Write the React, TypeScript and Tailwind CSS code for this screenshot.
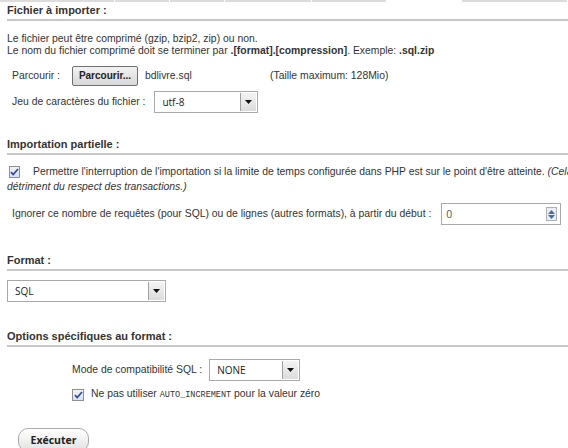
import React from "react";

const font = "font-['Liberation_Sans',Arial,sans-serif]";

function Tabs() {
  const tabs = [115, 55, 55, 87, 75, 75, 106];
  return (
    <div className="flex h-[2px] w-full">
      {tabs.map((w, i) => (
        <div
          key={i}
          style={{ width: w }}
          className={`h-full border-r border-white ${i === 5 ? "bg-white" : "bg-[#dcdcdc]"}`}
        />
      ))}
      <div className="h-full flex-1 bg-[#dcdcdc]" />
    </div>
  );
}

function Heading({ children }: { children: React.ReactNode }) {
  return (
    <div className="ml-[7px] border-b-2 border-[#c8c8c8] pb-[2px] text-[11px] font-bold leading-[13px] text-[#333]">
      {children}
    </div>
  );
}

function Arrow() {
  return (
    <div className="flex h-full w-[16px] items-center justify-center border-l border-[#a0a0a0] bg-gradient-to-b from-[#f4f4f4] to-[#dcdcdc]">
      <svg width="7" height="4" viewBox="0 0 7 4">
        <path d="M0 0h7L3.5 4z" fill="#111" />
      </svg>
    </div>
  );
}

function Select({ value, width, bold }: { value: string; width: number; bold?: boolean }) {
  return (
    <div
      style={{ width }}
      className="flex h-[22px] items-stretch border border-[#a9a9a9] bg-white"
    >
      <div
        className={`flex flex-1 items-center pl-[7px] font-['Open_Sans',sans-serif] text-[10px] text-[#222] ${bold ? "font-medium" : ""}`}
      >
        {value}
      </div>
      <div className="p-[1px]">
        <Arrow />
      </div>
    </div>
  );
}

function Check() {
  return (
    <div className="flex h-[12px] w-[12px] items-center justify-center border border-[#8f8f8f] bg-gradient-to-b from-[#eef3fb] to-[#d6e0ef]">
      <svg width="9" height="8" viewBox="0 0 9 8">
        <path d="M1 4.2l2.2 2.3L8 1" stroke="#33479a" strokeWidth="1.7" fill="none" />
      </svg>
    </div>
  );
}

export default function App() {
  return (
    <div className={`relative h-[448px] w-[568px] overflow-hidden bg-white ${font} text-[10.4px] leading-[12px] text-[#333]`}>
      <Tabs />

      {/* Fichier à importer */}
      <div className="pt-[2px]">
        <Heading>Fichier à importer :</Heading>
        <div className="ml-[7px] mt-[12px]">
          <div>Le fichier peut être comprimé (gzip, bzip2, zip) ou non.</div>
          <div>
            Le nom du fichier comprimé doit se terminer par <b>.[format].[compression]</b>. Exemple: <b>.sql.zip</b>
          </div>
        </div>
        <div className="ml-[12px] mt-[9px] flex h-[20px] items-center">
          <span className="w-[60px]">Parcourir :</span>
          <button className="h-[20px] w-[66px] rounded-[2px] border border-[#707070] bg-gradient-to-b from-[#f2f2f2] to-[#d8d8d8] text-[10px] font-bold text-[#222]">
            Parcourir...
          </button>
          <span className="ml-[7px] w-[125px]">bdlivre.sql</span>
          <span>(Taille maximum: 128Mio)</span>
        </div>
        <div className="ml-[12px] mt-[5px] flex items-center gap-[9px]">
          <span>Jeu de caractères du fichier :</span>
          <Select value="utf-8" width={104} />
        </div>
      </div>

      {/* Importation partielle */}
      <div className="mt-[25px]">
        <Heading>Importation partielle :</Heading>
        <div className="mt-[11px] ml-[9px] flex items-center gap-[13px] whitespace-nowrap">
          <Check />
          <span>
            Permettre l'interruption de l'importation si la limite de temps configurée dans PHP est sur le point d'être atteinte.{" "}
            <i>(Cela pourrait aider à importer des fichiers volumineux, au</i>
          </span>
        </div>
        <div className="ml-[7px] mt-[3px] italic">détriment du respect des transactions.)</div>
        <div className="ml-[12px] mt-[10px] flex items-center whitespace-nowrap">
          <span>Ignorer ce nombre de requêtes (pour SQL) ou de lignes (autres formats), à partir du début :</span>
          <div className="ml-[10px] flex h-[22px] w-[120px] items-center border border-[#a9a9a9] bg-white pl-[4px]">
            <span className="flex-1 font-['Open_Sans',sans-serif] text-[#555]">0</span>
            <div className="mr-[3px] flex h-[14px] w-[11px] flex-col items-center justify-center gap-[1px] border border-[#b0b0b0] bg-[#e8eef8]">
              <svg width="7" height="4" viewBox="0 0 7 4"><path d="M0 4h7L3.5 0z" fill="#4c6aa5" /></svg>
              <svg width="7" height="4" viewBox="0 0 7 4"><path d="M0 0h7L3.5 4z" fill="#4c6aa5" /></svg>
            </div>
          </div>
        </div>
      </div>

      {/* Format */}
      <div className="mt-[29px]">
        <Heading>Format :</Heading>
        <div className="ml-[7px] mt-[9px]">
          <Select value="SQL" width={159} />
        </div>
      </div>

      {/* Options spécifiques */}
      <div className="mt-[28px]">
        <Heading>Options spécifiques au format :</Heading>
        <div className="ml-[72px] mt-[12px] flex items-center gap-[7px]">
          <span>Mode de compatibilité SQL :</span>
          <Select value="NONE" width={91} bold />
        </div>
        <div className="ml-[72px] mt-[7px] flex items-center gap-[7px]">
          <Check />
          <span>
            Ne pas utiliser <code className="font-['Liberation_Mono',monospace] text-[8.5px]">AUTO_INCREMENT</code> pour la valeur zéro
          </span>
        </div>
      </div>

      <div className="ml-[18px] mt-[27px]">
        <button className="h-[24px] w-[71px] rounded-[10px] border border-[#aaa] bg-gradient-to-b from-white to-[#e2e2e2] font-['Open_Sans',sans-serif] text-[10.5px] font-bold text-[#222]">
          Exécuter
        </button>
      </div>
    </div>
  );
}
